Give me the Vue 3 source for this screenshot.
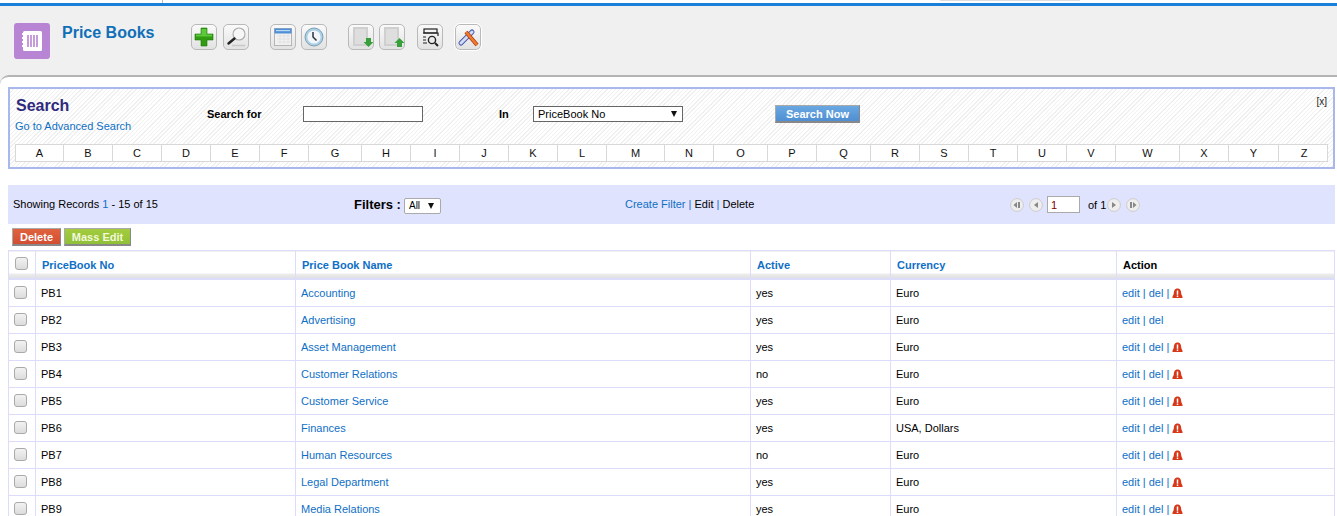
<script setup>
const letters = 'ABCDEFGHIJKLMNOPQRSTUVWXYZ'.split('')
const rows = [
  ['PB1', 'Accounting', 'yes', 'Euro', true],
  ['PB2', 'Advertising', 'yes', 'Euro', false],
  ['PB3', 'Asset Management', 'yes', 'Euro', true],
  ['PB4', 'Customer Relations', 'no', 'Euro', true],
  ['PB5', 'Customer Service', 'yes', 'Euro', true],
  ['PB6', 'Finances', 'yes', 'USA, Dollars', true],
  ['PB7', 'Human Resources', 'no', 'Euro', true],
  ['PB8', 'Legal Department', 'yes', 'Euro', true],
  ['PB9', 'Media Relations', 'yes', 'Euro', true],
]
</script>

<template>
  <div class="page">
    <div class="topstrip">
      <span class="tick"></span>
      <span class="topfield"></span>
    </div>
    <header class="head">
      <span class="logo">
        <svg width="36" height="36" viewBox="0 0 36 36">
          <rect width="36" height="36" rx="3" fill="#b884d4" />
          <rect x="9" y="8" width="19" height="20" rx="1.5" fill="#fff" />
          <path d="M8 11h3M8 15h3M8 19h3M8 23h3" stroke="#fff" stroke-width="2" />
          <path d="M14 12v12M17 12v12M20 12v12M23 12v12" stroke="#b884d4" stroke-width="1.6" />
        </svg>
      </span>
      <h1 class="title">Price Books</h1>
      <div class="tools">
        <span class="tool">
          <svg viewBox="0 0 24 24"><path d="M9 3h6v6h6v6h-6v6H9v-6H3V9h6z" fill="#2f9c12" stroke="#1d7a08" stroke-width=".6" /><path d="M9.500 4h5v5.500h-5zM4 9.500h16v2H4z" fill="#5cc83a" /></svg>
        </span>
        <span class="tool">
          <svg viewBox="0 0 24 24"><circle cx="15" cy="9" r="6" fill="#f6f6f6" stroke="#aaa" stroke-width="1.100" /><path d="M10.500 13.500 4.500 18.500" stroke="#222" stroke-width="2.400" stroke-linecap="round" /><path d="M8 20.500h13" stroke="#c8c8c8" stroke-width="1.500" /></svg>
        </span>
        <span class="tool gap">
          <svg viewBox="0 0 24 24"><rect x="3.500" y="3.500" width="17" height="17" fill="#f1f1f1" stroke="#b5b5b5" /><rect x="3.500" y="3.500" width="17" height="5" fill="#4f8fd6" /><rect x="5" y="5" width="14" height="1.200" fill="#bcd8f4" /><path d="M6 11h13M6 14h13M6 17h13M9 9v10M13 9v10M17 9v10" stroke="#dcdcdc" stroke-width=".7" /></svg>
        </span>
        <span class="tool near">
          <svg viewBox="0 0 24 24"><circle cx="12" cy="12" r="9" fill="#a9cfe4" stroke="#7f9fb4" /><circle cx="12" cy="12" r="6.600" fill="#f0f6fa" /><path d="M11 7v5l3.500 3.500" fill="none" stroke="#333" stroke-width="1.500" /></svg>
        </span>
        <span class="tool gap">
          <svg viewBox="0 0 24 24"><rect x="4" y="2" width="15" height="19" fill="#cfcfcf" /><rect x="6" y="4" width="11" height="15" fill="#dedede" /><path d="M17 13h5v4h2.500l-5 5-5-5H17z" fill="#37a03a" /></svg>
        </span>
        <span class="tool near">
          <svg viewBox="0 0 24 24"><rect x="4" y="2" width="15" height="19" fill="#cfcfcf" /><rect x="6" y="4" width="11" height="15" fill="#dedede" /><path d="M17 22v-4h-2.500l5-5 5 5H22v4z" fill="#37a03a" /></svg>
        </span>
        <span class="tool mid">
          <svg viewBox="0 0 24 24" fill="none" stroke="#222" stroke-width="1.200"><rect x="6" y="4" width="13" height="4" /><path d="M5 8h15v3" /><path d="M5 12h3M5 15h3M5 18h4" /><circle cx="14" cy="15" r="3.600" stroke-width="1.400" /><path d="M17 18l3 3" stroke-width="2" /></svg>
        </span>
        <span class="tool wide">
          <svg viewBox="0 0 24 24" fill="none"><path d="M5 18 16 7" stroke="#4a5aa8" stroke-width="5" stroke-linecap="round" /><path d="M5 18 16 7" stroke="#d0dbf6" stroke-width="3" stroke-linecap="round" /><path d="M10 7l11 13" stroke="#a83d10" stroke-width="4" /><path d="M10 7l11 13" stroke="#f27a30" stroke-width="2.500" /></svg>
        </span>
      </div>
    </header>

    <main class="content">
      <section class="search">
        <div class="search-top">
          <div class="search-title">
            <h2>Search</h2>
            <a>Go to Advanced Search</a>
          </div>
          <b class="search-for">Search for</b>
          <input class="search-input" type="text" />
          <b class="search-in">In</b>
          <span class="select">PriceBook No<i class="arrow"></i></span>
          <span class="search-now">Search Now</span>
          <span class="close">[x]</span>
        </div>
        <div class="alpha">
          <span v-for="l in letters" :key="l">{{ l }}</span>
        </div>
      </section>

      <section class="bar">
        <span class="records">Showing Records <em>1</em> - 15 of 15</span>
        <span class="filters"><b>Filters :</b><span class="filter-select">All<i class="arrow"></i></span></span>
        <span class="filter-links"><a>Create Filter</a> <em>|</em> Edit <em>|</em> Delete</span>
        <span class="pager">
          <svg class="pg" viewBox="0 0 14 14"><circle cx="7" cy="7" r="6.400" fill="#eee" stroke="#ccc" /><path d="M7 4v6L3.500 7zM8 4h2v6H8z" fill="#888" /></svg>
          <svg class="pg" viewBox="0 0 14 14"><circle cx="7" cy="7" r="6.400" fill="#eee" stroke="#ccc" /><path d="M9 4v6L5 7z" fill="#888" /></svg>
          <input class="page-input" type="text" value="1" />
          <span class="of">of 1</span>
          <svg class="pg" viewBox="0 0 14 14"><circle cx="7" cy="7" r="6.400" fill="#eee" stroke="#ccc" /><path d="M5 4v6l4-3z" fill="#888" /></svg>
          <svg class="pg" viewBox="0 0 14 14"><circle cx="7" cy="7" r="6.400" fill="#eee" stroke="#ccc" /><path d="M4 4h2v6H4zM7 4v6l3.500-3z" fill="#888" /></svg>
        </span>
      </section>

      <div class="actions">
        <span class="btn red">Delete</span>
        <span class="btn green">Mass Edit</span>
      </div>

      <table class="list">
        <colgroup>
          <col class="c0" /><col class="c1" /><col class="c2" /><col class="c3" /><col class="c4" /><col />
        </colgroup>
        <thead>
          <tr>
            <th><span class="cb"></span></th>
            <th><a>PriceBook No</a></th>
            <th><a>Price Book Name</a></th>
            <th><a>Active</a></th>
            <th><a>Currency</a></th>
            <th>Action</th>
          </tr>
        </thead>
        <tbody>
          <tr v-for="r in rows" :key="r[0]">
            <td><span class="cb"></span></td>
            <td>{{ r[0] }}</td>
            <td><a>{{ r[1] }}</a></td>
            <td>{{ r[2] }}</td>
            <td>{{ r[3] }}</td>
            <td class="act">
              <a>edit</a> | <a>del</a>
              <template v-if="r[4]"> | <svg class="warn" viewBox="0 0 12 12"><path d="M6 .5C9 .5 10 3 10 5.500c0 2 1.500 3 1.500 4.500v1H.5v-1C.5 8.500 2 7.500 2 5.500 2 3 3 .5 6 .5z" fill="#d8381a" /><path d="M5.200 2.800h1.600v4.600H5.200zM5.200 8.200h1.600v1.500H5.200z" fill="#fff" /></svg></template>
            </td>
          </tr>
        </tbody>
      </table>
    </main>
  </div>
</template>

<style>
html, body { margin: 0; height: 516px; overflow: hidden; background: #fff; }
</style>

<style scoped>
.page { font-family: "Liberation Sans", Arial, sans-serif; font-size: 11px; color: #000; height: 516px; overflow: hidden; background: #f0f0f0; display: flex; flex-direction: column; }
a { color: #0f6fc6; }
em { font-style: normal; color: #0f6fc6; }

.topstrip { height: 3px; flex: none; background: #fff; display: flex; }
.tick { margin-left: 162px; width: 1px; background: #bbb; }
.topfield { margin-left: 777px; width: 140px; height: 1px; background: #ddd; }
.head { height: 69px; flex: none; background: #f0f0f0; border-top: 3px solid #1a7fd9; display: flex; align-items: flex-start; }
.logo { margin: 17px 0 0 14px; width: 36px; height: 36px; }
.logo svg { display: block; }
.title { margin: 17px 0 0 12px; font-size: 16px; line-height: 20px; font-weight: bold; color: #0f6fb8; width: 129px; white-space: nowrap; }
.tools { display: flex; margin-top: 18px; }
.tool { width: 24px; height: 24px; border: 1px solid #b9b9b9; border-radius: 5px; background: linear-gradient(#fafafa, #e2e2e2); display: block; margin-left: 6px; }
.tool:first-child { margin-left: 0; }
.tool svg { display: block; width: 24px; height: 24px; }
.tool.gap { margin-left: 21px; }
.tool.near { margin-left: 5px; }
.tool.mid { margin-left: 12px; }
.tool.wide { margin-left: 12px; outline: 1px solid #fff; }

.content { flex: 1; padding: 10px 2px 0 8px; background: #fff; border-top: 2px solid #b4b4b4; border-top-left-radius: 9px; }
.search { height: 78px; border: 2px solid #a8b8ec; background: repeating-linear-gradient(135deg, #fff 0 2px, #f0f0f0 2px 3px); padding: 0 6px; }
.search-top { height: 55px; display: flex; align-items: flex-start; position: relative; }
.search-title { width: 191px; padding-top: 7px; }
.search-title h2 { margin: 0; font-size: 16px; line-height: 20px; color: #2f2a7e; }
.search-title a { display: block; margin-top: 4px; line-height: 13px; font-size: 11px; margin-left: -1px; white-space: nowrap; }
.search-for { width: 96px; margin-top: 19px; line-height: 13px; }
.search-input { width: 118px; height: 14px; margin: 17px 76px 0 0; padding: 0; border: 1px solid #666; background: #fff; box-sizing: content-box; outline: 0; }
.search-in { width: 34px; margin-top: 19px; line-height: 13px; font-weight: bold; }
.select { height: 14px; margin-top: 17px; border: 1px solid #666; background: #fff; display: flex; justify-content: space-between; align-items: center; padding: 0 5px 0 4px; box-sizing: content-box; width: 139px; line-height: 14px; }
.arrow { display: inline-block; width: 0; height: 0; border-left: 3.500px solid transparent; border-right: 3.500px solid transparent; border-top: 6px solid #111; }
.search-now { margin: 16px 0 0 92px; width: 85px; height: 18px; box-sizing: border-box; border: 1px solid #aaa; border-right-color: #888; border-bottom: 2px solid #888; background: linear-gradient(#6aa8e2, #4f8fd2); color: #fff; font-weight: bold; text-align: center; line-height: 15px; padding-top: 1px; }
.close { position: absolute; right: 0; top: 6px; line-height: 13px; font-size: 10px; color: #222; }
.alpha { height: 18px; display: grid; grid-template-columns: 47px 49px 49px 49px 49px 49px 53px 49px 49px 49px 49px 49px 58px 49px 54px 49px 54px 49px 49px 49px 49px 49px 64px 49px 50px 51px; width: 1313px; background: #fff; border: 1px solid #d8d8d8; box-sizing: border-box; margin-left: -1px; }
.alpha span { text-align: center; line-height: 16px; border-left: 1px solid #d8d8d8; color: #111; }
.alpha span:first-child { border-left: 0; }

.bar { margin-top: 16px; height: 39px; background: #e0e3fd; display: flex; align-items: center; }
.records { margin-left: 5px; width: 341px; white-space: nowrap; padding-bottom: 2px; }
.filters { width: 271px; display: flex; align-items: center; }
.filters b { font-size: 13px; margin-right: 3px; font-weight: bold; }
.filter-select { height: 14px; box-sizing: content-box; border: 1px solid #aaa; border-radius: 2px; background: #fff; display: flex; align-items: center; justify-content: space-between; padding: 0 6px 0 4px; width: 25px; font-size: 10px; margin-top: 2px; }
.filter-links { width: 385px; white-space: nowrap; padding-bottom: 2px; }
.pager { display: flex; align-items: center; }
.pg { width: 14px; height: 14px; margin-right: 5px; display: block; }
.pg:nth-child(2) { margin-right: 4px; }
.page-input { width: 28px; height: 15px; padding: 0 0 0 3px; border: 1px solid #aaa; background: #fff; font: 11px "Liberation Sans", sans-serif; color: #800000; outline: 0; box-sizing: content-box; margin-right: 8px; }
.of { width: 19px; white-space: nowrap; }

.actions { height: 26px; display: flex; align-items: center; padding-left: 4px; gap: 3px; }
.btn { height: 18px; box-sizing: border-box; border: 1px solid #aaa; border-right-color: #888; border-bottom: 2px solid #888; font-weight: bold; line-height: 15px; text-align: center; padding-top: 1px; }
.red { width: 49px; background: linear-gradient(#e0623e, #d24e32); color: #fff; }
.green { width: 67px; background: linear-gradient(#a4cc3e, #8fc038); color: #f2f9d8; }

.list { width: 1327px; border-collapse: collapse; table-layout: fixed; border: 1px solid #dcdcfb; }
.c0 { width: 27px; }
.c1 { width: 260px; }
.c2 { width: 455px; }
.c3 { width: 140px; }
.c4 { width: 226px; }
.list th { height: 25px; padding: 2px 6px 0; text-align: left; font-weight: bold; border: 1px solid #dcdcfb; border-bottom: 2px solid #dcdcfb; background: linear-gradient(#fff 0 22px, #eee 22px, #dfdfdf 27px); vertical-align: top; line-height: 25px; }
.list td { height: 26px; padding: 0 5px; border: 1px solid #dcdcfb; white-space: nowrap; }
.list th:first-child, .list td:first-child { padding: 0; text-align: center; }
.cb { display: block; width: 11px; height: 11px; border: 1px solid #aaa; border-radius: 3px; background: linear-gradient(#f2f2f2, #dcdcdc); margin: 0 0 2px 5px; }
.list th .cb { margin: 6px 0 0 6px; }
.act { color: #0f6fc6; }
.warn { width: 11px; height: 11px; vertical-align: -2px; }
</style>
